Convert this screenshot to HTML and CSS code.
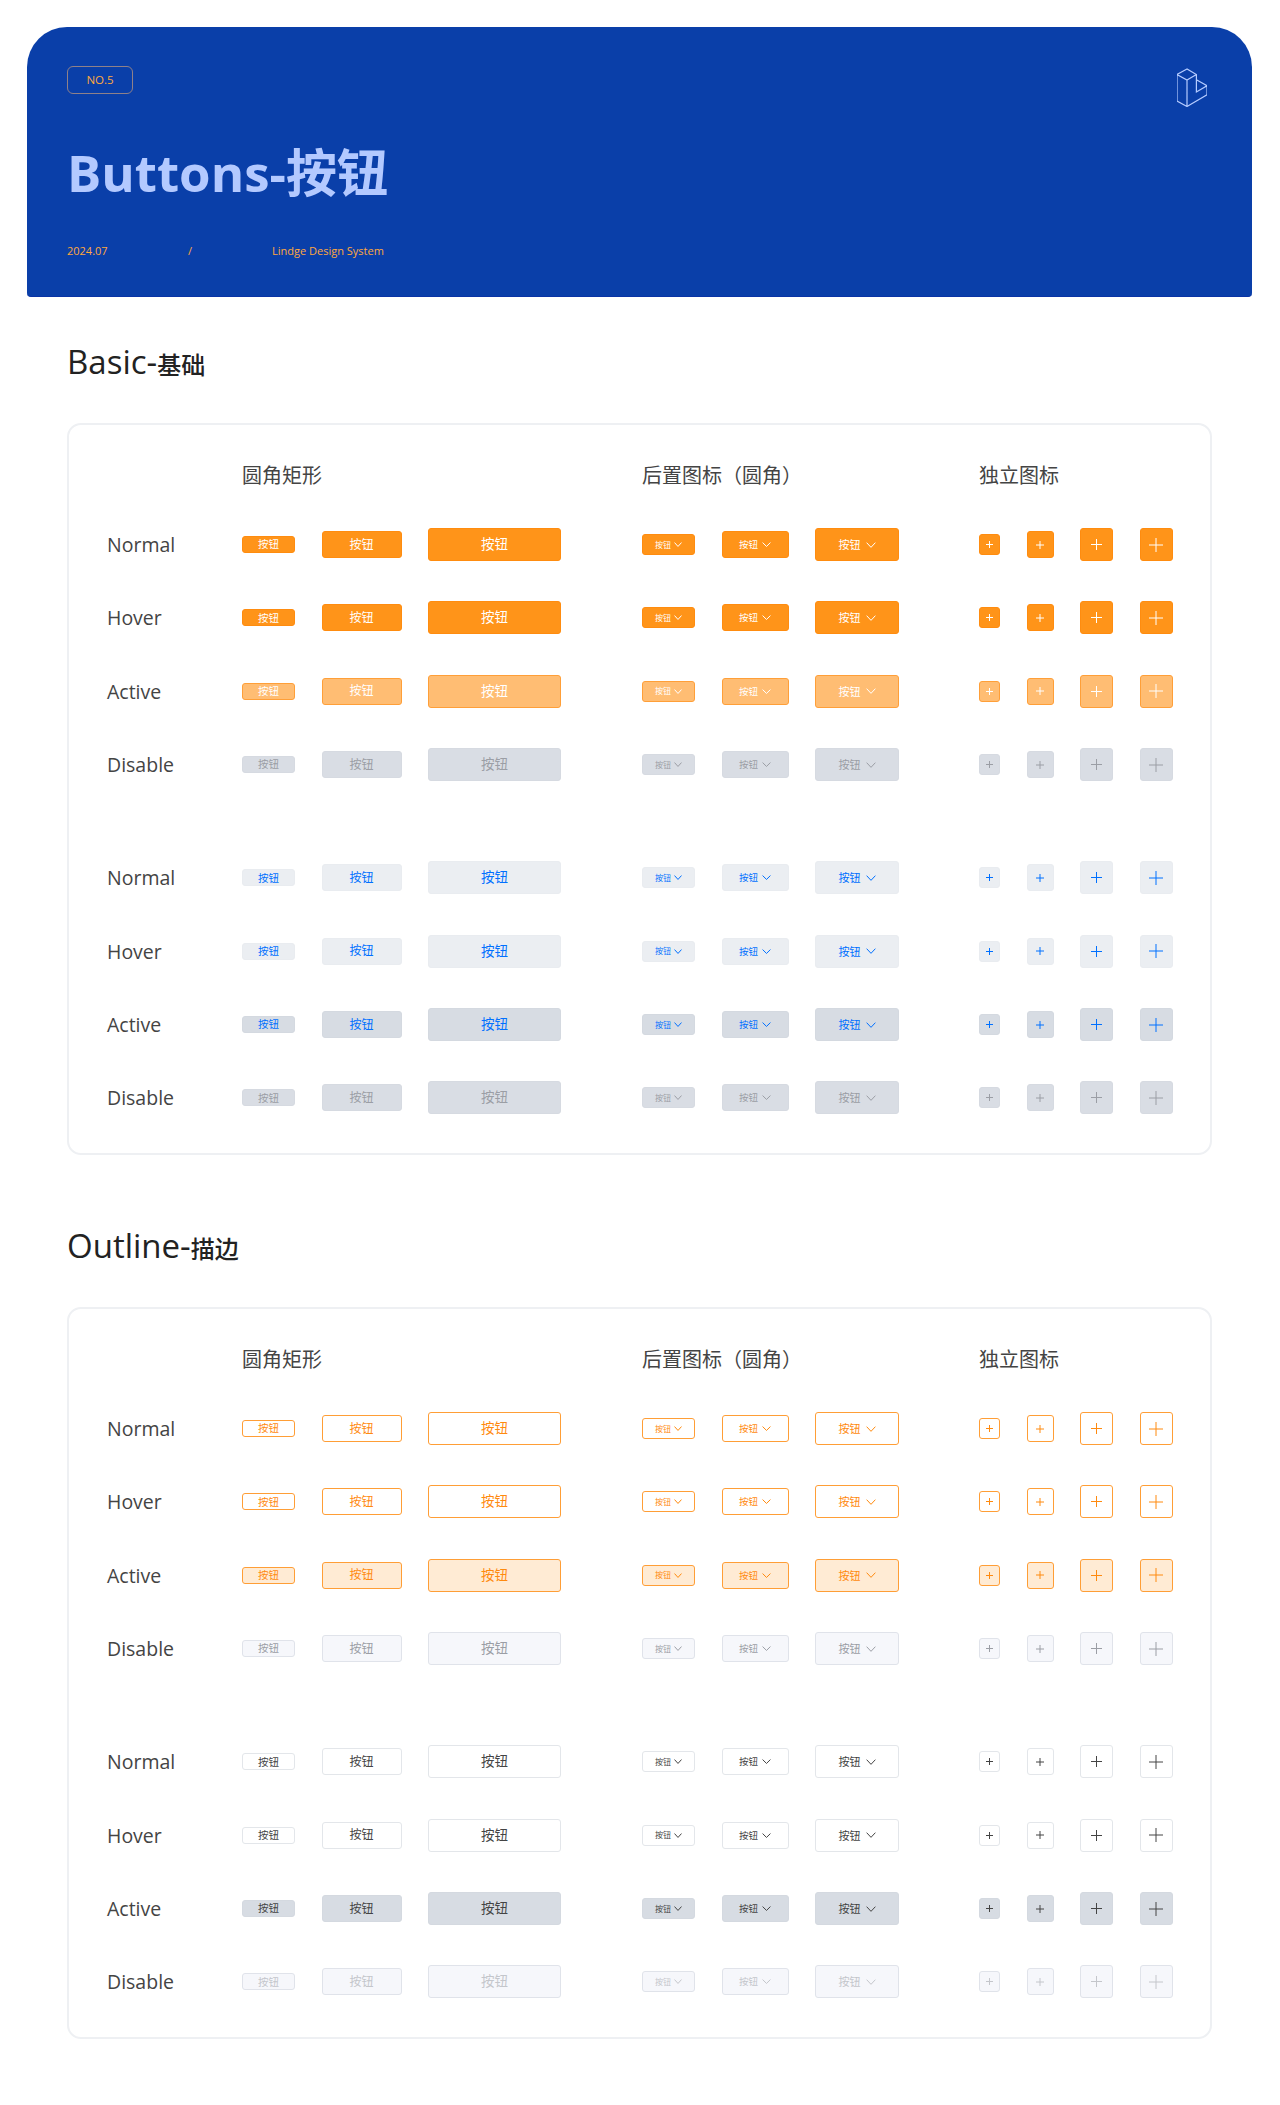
FILE: index.html
```html
<!DOCTYPE html>
<html lang="zh-CN">
<head>
    <meta charset="UTF-8">
    <title>Buttons-按钮</title>
    <link rel="stylesheet" href="styles.css">
</head>
<body>
    <svg class="defs" aria-hidden="true">
        <symbol id="chev" viewBox="0 0 16 9" preserveAspectRatio="none"><path d="M1 1 8 8 15 1" vector-effect="non-scaling-stroke"/></symbol>
        <symbol id="plus" viewBox="0 0 16 16"><path d="M8 0V16M0 8H16" vector-effect="non-scaling-stroke"/></symbol>
    </svg>

    <header class="hero">
        <div class="hero-top">
            <span class="badge">NO.5</span>
            <svg class="logo" viewBox="0 0 30 39" fill="none"><path d="M10 1 0 6.500V33L10 38.500 30 26.800V17.800L19.400 24V6.500ZM0 6.500 10 12 19.400 6.500M10 12V38.500M19.400 11.800 30 17.800"/></svg>
        </div>
        <h1 class="hero-title">Buttons-按钮</h1>
        <div class="hero-meta"><span>2024.07</span><span>/</span><span>Lindge Design System</span></div>
    </header>

    <h2 class="section-title basic">Basic-<span class="cjk">基础</span></h2>
    <section class="card">
        <div class="row head"><span></span><span>圆角矩形</span><span>后置图标（圆角）</span><span>独立图标</span></div>

        <div class="row primary"><span class="state">Normal</span><div class="cell"><button class="btn t-sm">按钮</button><button class="btn t-md">按钮</button><button class="btn t-lg">按钮</button></div><div class="cell"><button class="btn d-sm">按钮<svg><use href="#chev"/></svg></button><button class="btn d-md">按钮<svg><use href="#chev"/></svg></button><button class="btn d-lg">按钮<svg><use href="#chev"/></svg></button></div><div class="cell"><button class="btn i-xs"><svg><use href="#plus"/></svg></button><button class="btn i-sm"><svg><use href="#plus"/></svg></button><button class="btn i-md"><svg><use href="#plus"/></svg></button><button class="btn i-lg"><svg><use href="#plus"/></svg></button></div></div>
        <div class="row primary"><span class="state">Hover</span><div class="cell"><button class="btn t-sm">按钮</button><button class="btn t-md">按钮</button><button class="btn t-lg">按钮</button></div><div class="cell"><button class="btn d-sm">按钮<svg><use href="#chev"/></svg></button><button class="btn d-md">按钮<svg><use href="#chev"/></svg></button><button class="btn d-lg">按钮<svg><use href="#chev"/></svg></button></div><div class="cell"><button class="btn i-xs"><svg><use href="#plus"/></svg></button><button class="btn i-sm"><svg><use href="#plus"/></svg></button><button class="btn i-md"><svg><use href="#plus"/></svg></button><button class="btn i-lg"><svg><use href="#plus"/></svg></button></div></div>
        <div class="row primary-active"><span class="state">Active</span><div class="cell"><button class="btn t-sm">按钮</button><button class="btn t-md">按钮</button><button class="btn t-lg">按钮</button></div><div class="cell"><button class="btn d-sm">按钮<svg><use href="#chev"/></svg></button><button class="btn d-md">按钮<svg><use href="#chev"/></svg></button><button class="btn d-lg">按钮<svg><use href="#chev"/></svg></button></div><div class="cell"><button class="btn i-xs"><svg><use href="#plus"/></svg></button><button class="btn i-sm"><svg><use href="#plus"/></svg></button><button class="btn i-md"><svg><use href="#plus"/></svg></button><button class="btn i-lg"><svg><use href="#plus"/></svg></button></div></div>
        <div class="row muted"><span class="state">Disable</span><div class="cell"><button class="btn t-sm">按钮</button><button class="btn t-md">按钮</button><button class="btn t-lg">按钮</button></div><div class="cell"><button class="btn d-sm">按钮<svg><use href="#chev"/></svg></button><button class="btn d-md">按钮<svg><use href="#chev"/></svg></button><button class="btn d-lg">按钮<svg><use href="#chev"/></svg></button></div><div class="cell"><button class="btn i-xs"><svg><use href="#plus"/></svg></button><button class="btn i-sm"><svg><use href="#plus"/></svg></button><button class="btn i-md"><svg><use href="#plus"/></svg></button><button class="btn i-lg"><svg><use href="#plus"/></svg></button></div></div>

        <div class="row light group-start"><span class="state">Normal</span><div class="cell"><button class="btn t-sm">按钮</button><button class="btn t-md">按钮</button><button class="btn t-lg">按钮</button></div><div class="cell"><button class="btn d-sm">按钮<svg><use href="#chev"/></svg></button><button class="btn d-md">按钮<svg><use href="#chev"/></svg></button><button class="btn d-lg">按钮<svg><use href="#chev"/></svg></button></div><div class="cell"><button class="btn i-xs"><svg><use href="#plus"/></svg></button><button class="btn i-sm"><svg><use href="#plus"/></svg></button><button class="btn i-md"><svg><use href="#plus"/></svg></button><button class="btn i-lg"><svg><use href="#plus"/></svg></button></div></div>
        <div class="row light"><span class="state">Hover</span><div class="cell"><button class="btn t-sm">按钮</button><button class="btn t-md">按钮</button><button class="btn t-lg">按钮</button></div><div class="cell"><button class="btn d-sm">按钮<svg><use href="#chev"/></svg></button><button class="btn d-md">按钮<svg><use href="#chev"/></svg></button><button class="btn d-lg">按钮<svg><use href="#chev"/></svg></button></div><div class="cell"><button class="btn i-xs"><svg><use href="#plus"/></svg></button><button class="btn i-sm"><svg><use href="#plus"/></svg></button><button class="btn i-md"><svg><use href="#plus"/></svg></button><button class="btn i-lg"><svg><use href="#plus"/></svg></button></div></div>
        <div class="row light-active"><span class="state">Active</span><div class="cell"><button class="btn t-sm">按钮</button><button class="btn t-md">按钮</button><button class="btn t-lg">按钮</button></div><div class="cell"><button class="btn d-sm">按钮<svg><use href="#chev"/></svg></button><button class="btn d-md">按钮<svg><use href="#chev"/></svg></button><button class="btn d-lg">按钮<svg><use href="#chev"/></svg></button></div><div class="cell"><button class="btn i-xs"><svg><use href="#plus"/></svg></button><button class="btn i-sm"><svg><use href="#plus"/></svg></button><button class="btn i-md"><svg><use href="#plus"/></svg></button><button class="btn i-lg"><svg><use href="#plus"/></svg></button></div></div>
        <div class="row muted"><span class="state">Disable</span><div class="cell"><button class="btn t-sm">按钮</button><button class="btn t-md">按钮</button><button class="btn t-lg">按钮</button></div><div class="cell"><button class="btn d-sm">按钮<svg><use href="#chev"/></svg></button><button class="btn d-md">按钮<svg><use href="#chev"/></svg></button><button class="btn d-lg">按钮<svg><use href="#chev"/></svg></button></div><div class="cell"><button class="btn i-xs"><svg><use href="#plus"/></svg></button><button class="btn i-sm"><svg><use href="#plus"/></svg></button><button class="btn i-md"><svg><use href="#plus"/></svg></button><button class="btn i-lg"><svg><use href="#plus"/></svg></button></div></div>
    </section>

    <h2 class="section-title outline">Outline-<span class="cjk">描边</span></h2>
    <section class="card">
        <div class="row head"><span></span><span>圆角矩形</span><span>后置图标（圆角）</span><span>独立图标</span></div>

        <div class="row stroke"><span class="state">Normal</span><div class="cell"><button class="btn t-sm">按钮</button><button class="btn t-md">按钮</button><button class="btn t-lg">按钮</button></div><div class="cell"><button class="btn d-sm">按钮<svg><use href="#chev"/></svg></button><button class="btn d-md">按钮<svg><use href="#chev"/></svg></button><button class="btn d-lg">按钮<svg><use href="#chev"/></svg></button></div><div class="cell"><button class="btn i-xs"><svg><use href="#plus"/></svg></button><button class="btn i-sm"><svg><use href="#plus"/></svg></button><button class="btn i-md"><svg><use href="#plus"/></svg></button><button class="btn i-lg"><svg><use href="#plus"/></svg></button></div></div>
        <div class="row stroke"><span class="state">Hover</span><div class="cell"><button class="btn t-sm">按钮</button><button class="btn t-md">按钮</button><button class="btn t-lg">按钮</button></div><div class="cell"><button class="btn d-sm">按钮<svg><use href="#chev"/></svg></button><button class="btn d-md">按钮<svg><use href="#chev"/></svg></button><button class="btn d-lg">按钮<svg><use href="#chev"/></svg></button></div><div class="cell"><button class="btn i-xs"><svg><use href="#plus"/></svg></button><button class="btn i-sm"><svg><use href="#plus"/></svg></button><button class="btn i-md"><svg><use href="#plus"/></svg></button><button class="btn i-lg"><svg><use href="#plus"/></svg></button></div></div>
        <div class="row stroke-active"><span class="state">Active</span><div class="cell"><button class="btn t-sm">按钮</button><button class="btn t-md">按钮</button><button class="btn t-lg">按钮</button></div><div class="cell"><button class="btn d-sm">按钮<svg><use href="#chev"/></svg></button><button class="btn d-md">按钮<svg><use href="#chev"/></svg></button><button class="btn d-lg">按钮<svg><use href="#chev"/></svg></button></div><div class="cell"><button class="btn i-xs"><svg><use href="#plus"/></svg></button><button class="btn i-sm"><svg><use href="#plus"/></svg></button><button class="btn i-md"><svg><use href="#plus"/></svg></button><button class="btn i-lg"><svg><use href="#plus"/></svg></button></div></div>
        <div class="row stroke-muted"><span class="state">Disable</span><div class="cell"><button class="btn t-sm">按钮</button><button class="btn t-md">按钮</button><button class="btn t-lg">按钮</button></div><div class="cell"><button class="btn d-sm">按钮<svg><use href="#chev"/></svg></button><button class="btn d-md">按钮<svg><use href="#chev"/></svg></button><button class="btn d-lg">按钮<svg><use href="#chev"/></svg></button></div><div class="cell"><button class="btn i-xs"><svg><use href="#plus"/></svg></button><button class="btn i-sm"><svg><use href="#plus"/></svg></button><button class="btn i-md"><svg><use href="#plus"/></svg></button><button class="btn i-lg"><svg><use href="#plus"/></svg></button></div></div>

        <div class="row neutral group-start"><span class="state">Normal</span><div class="cell"><button class="btn t-sm">按钮</button><button class="btn t-md">按钮</button><button class="btn t-lg">按钮</button></div><div class="cell"><button class="btn d-sm">按钮<svg><use href="#chev"/></svg></button><button class="btn d-md">按钮<svg><use href="#chev"/></svg></button><button class="btn d-lg">按钮<svg><use href="#chev"/></svg></button></div><div class="cell"><button class="btn i-xs"><svg><use href="#plus"/></svg></button><button class="btn i-sm"><svg><use href="#plus"/></svg></button><button class="btn i-md"><svg><use href="#plus"/></svg></button><button class="btn i-lg"><svg><use href="#plus"/></svg></button></div></div>
        <div class="row neutral"><span class="state">Hover</span><div class="cell"><button class="btn t-sm">按钮</button><button class="btn t-md">按钮</button><button class="btn t-lg">按钮</button></div><div class="cell"><button class="btn d-sm">按钮<svg><use href="#chev"/></svg></button><button class="btn d-md">按钮<svg><use href="#chev"/></svg></button><button class="btn d-lg">按钮<svg><use href="#chev"/></svg></button></div><div class="cell"><button class="btn i-xs"><svg><use href="#plus"/></svg></button><button class="btn i-sm"><svg><use href="#plus"/></svg></button><button class="btn i-md"><svg><use href="#plus"/></svg></button><button class="btn i-lg"><svg><use href="#plus"/></svg></button></div></div>
        <div class="row neutral-active"><span class="state">Active</span><div class="cell"><button class="btn t-sm">按钮</button><button class="btn t-md">按钮</button><button class="btn t-lg">按钮</button></div><div class="cell"><button class="btn d-sm">按钮<svg><use href="#chev"/></svg></button><button class="btn d-md">按钮<svg><use href="#chev"/></svg></button><button class="btn d-lg">按钮<svg><use href="#chev"/></svg></button></div><div class="cell"><button class="btn i-xs"><svg><use href="#plus"/></svg></button><button class="btn i-sm"><svg><use href="#plus"/></svg></button><button class="btn i-md"><svg><use href="#plus"/></svg></button><button class="btn i-lg"><svg><use href="#plus"/></svg></button></div></div>
        <div class="row neutral-muted"><span class="state">Disable</span><div class="cell"><button class="btn t-sm">按钮</button><button class="btn t-md">按钮</button><button class="btn t-lg">按钮</button></div><div class="cell"><button class="btn d-sm">按钮<svg><use href="#chev"/></svg></button><button class="btn d-md">按钮<svg><use href="#chev"/></svg></button><button class="btn d-lg">按钮<svg><use href="#chev"/></svg></button></div><div class="cell"><button class="btn i-xs"><svg><use href="#plus"/></svg></button><button class="btn i-sm"><svg><use href="#plus"/></svg></button><button class="btn i-md"><svg><use href="#plus"/></svg></button><button class="btn i-lg"><svg><use href="#plus"/></svg></button></div></div>
    </section>
</body>
</html>
```

FILE: styles.css
```css
* {
    box-sizing: border-box;
}
body {
    margin: 0;
    padding: 27px 28px 66px 27px;
    background: #fff;
    color: #444;
    font-family: "Open Sans", "Noto Sans CJK SC", sans-serif;
}
.defs {
    display: none;
}

/* hero */
.hero {
    height: 270px;
    padding: 39px 45px 0 40px;
    background: #0a3fa9;
    border-bottom: 1px solid #0a33a5;
    border-radius: 40px 40px 4px 4px;
}
.hero-top {
    display: flex;
    justify-content: space-between;
    align-items: flex-start;
    height: 41px;
}
.badge {
    width: 66px;
    height: 28px;
    border: 1px solid #8f8189;
    border-radius: 6px;
    color: #ffa83d;
    font-size: 11.5px;
    line-height: 26px;
    text-align: center;
}
.logo {
    width: 30px;
    height: 39px;
    margin-top: 2px;
    stroke: #b6ccff;
    stroke-width: 1.2;
}
.hero-title {
    margin: 30px 0 0;
    color: #b3c9ff;
    font-size: 51px;
    font-weight: 700;
    line-height: 70px;
}
.hero-meta {
    display: grid;
    grid-template-columns: 121px 84px auto;
    margin-top: 34px;
    color: #ffa83d;
    font-size: 11px;
    line-height: 20px;
}

/* section headings */
.section-title {
    height: 40px;
    margin: 45px 0 41px 40px;
    color: #222;
    font-weight: 500;
    line-height: 40px;
}
.section-title.basic {
    font-size: 33px;
}
.section-title.outline {
    margin-top: 71px;
    font-size: 33px;
}
.cjk {
    font-size: 24px;
}

/* card and rows */
.card {
    height: 732px;
    margin: 0 40px;
    padding: 36px 26px 18px 38px;
    border: 2px solid #eef0f3;
    border-radius: 14px;
}
.row {
    display: grid;
    grid-template-columns: 135px 400px 337px auto;
    align-items: center;
    height: 73.33px;
}
.row.head {
    height: 30px;
    margin-bottom: 17px;
    font-size: 20px;
    line-height: 30px;
}
.row.group-start {
    margin-top: 40px;
}
.state {
    font-size: 19.500px;
}
.cell {
    display: flex;
    align-items: center;
    gap: 26.500px;
}

/* button sizes */
.btn {
    display: flex;
    justify-content: center;
    align-items: center;
    padding: 0;
    background: var(--bg);
    border: 1px solid var(--bd);
    border-radius: 3px;
    color: var(--fg);
    font-family: inherit;
    line-height: 1;
}
.btn svg {
    fill: none;
    stroke: currentColor;
    stroke-width: 1;
}
.t-sm { width: 53px; height: 17px; font-size: 10.5px; }
.t-md { width: 80px; height: 27px; font-size: 12px; }
.t-lg { width: 133px; height: 33px; font-size: 13.5px; }
.d-sm { width: 53px; height: 21px; font-size: 8px; gap: 3px; }
.d-md { width: 67px; height: 27px; font-size: 9.5px; gap: 4px; }
.d-lg { width: 84px; height: 33px; font-size: 11px; gap: 5px; }
.d-sm svg { width: 8px; height: 5px; }
.d-md svg { width: 9px; height: 5px; }
.d-lg svg { width: 10px; height: 6px; }
.i-xs { width: 21px; height: 21px; }
.i-sm { width: 27px; height: 27px; }
.i-md { width: 33px; height: 33px; }
.i-lg { width: 33px; height: 33px; }
.i-xs svg { width: 7px; height: 7px; }
.i-sm svg { width: 8px; height: 8px; }
.i-md svg { width: 11px; height: 11px; }
.i-lg svg { width: 14px; height: 14px; }

/* button states */
.primary { --bg: #ff9419; --bd: #ff8c0f; --fg: #fff; }
.primary-active { --bg: #ffbd73; --bd: #ff9f38; --fg: #fff; }
.muted { --bg: #d9dde4; --bd: #d6dae1; --fg: #9b9ea5; }
.light { --bg: #ebeef2; --bd: #e9ecf0; --fg: #0070ff; }
.light-active { --bg: #d7dce3; --bd: #d4d9e0; --fg: #0070ff; }
.stroke { --bg: #fff; --bd: #ff9e36; --fg: #ff8a0f; }
.stroke-active { --bg: #ffebd4; --bd: #ff9e36; --fg: #ff8a0f; }
.stroke-muted { --bg: #f6f7fb; --bd: #e0e3ea; --fg: #9b9ea5; }
.neutral { --bg: #fff; --bd: #e3e6ea; --fg: #444; }
.neutral-active { --bg: #d7dce3; --bd: #d4d9e0; --fg: #444; }
.neutral-muted { --bg: #f6f7fb; --bd: #e0e3ea; --fg: #c4c6cb; }
```
